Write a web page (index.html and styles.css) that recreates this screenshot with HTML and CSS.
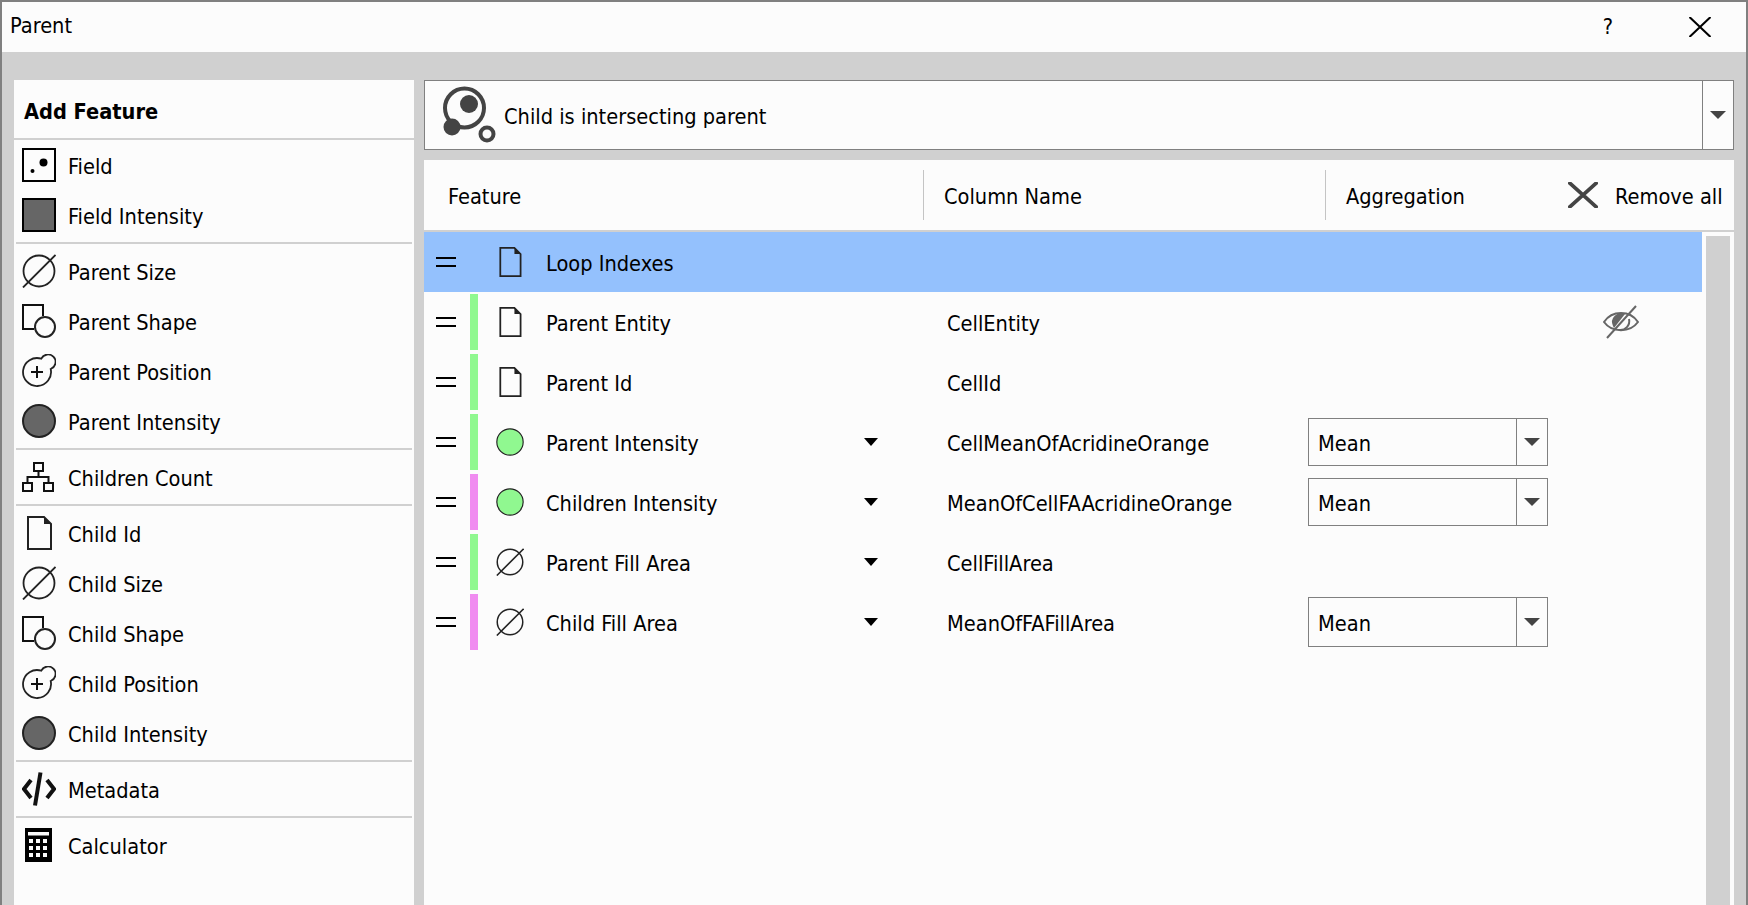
FILE: index.html
```html
<!DOCTYPE html>
<html lang="en">
<head>
    <meta charset="UTF-8">
    <meta name="viewport" content="width=device-width, initial-scale=1.0">
    <title>Parent</title>
    <link rel="stylesheet" href="styles.css">
</head>
<body>

    <!-- shared icons -->
    <svg class="defs" width="0" height="0">
        <symbol id="i-field" viewBox="0 0 34 34"><rect x="1" y="1" width="32" height="32" fill="none" stroke="#000" stroke-width="2"/><circle cx="21.5" cy="14.5" r="4" fill="#000"/><circle cx="10.5" cy="23" r="2" fill="#000"/></symbol>
        <symbol id="i-square" viewBox="0 0 34 34"><rect x="1" y="1" width="32" height="32" fill="#666" stroke="#000" stroke-width="2"/></symbol>
        <symbol id="i-size" viewBox="0 0 34 34"><circle cx="17" cy="17" r="15.5" fill="none" stroke="#222" stroke-width="1.8"/><path d="M1 33.5L33.5 1" stroke="#222" stroke-width="1.8"/></symbol>
        <symbol id="i-shape" viewBox="0 0 34 34"><path d="M21 12V1H1V25H12" fill="none" stroke="#111" stroke-width="2"/><circle cx="23" cy="23" r="10" fill="none" stroke="#222" stroke-width="2"/></symbol>
        <symbol id="i-pos" viewBox="0 0 34 34"><path d="M19.3 4.7A14 14 0 1 0 28.7 15A7.5 7.5 0 1 0 19.3 4.7Z" fill="none" stroke="#222" stroke-width="1.8"/><path d="M9 18H21M15 12V24" stroke="#111" stroke-width="2"/></symbol>
        <symbol id="i-disc" viewBox="0 0 34 34"><circle cx="17" cy="17" r="16" fill="#666" stroke="#222" stroke-width="2"/></symbol>
        <symbol id="i-disc-green" viewBox="0 0 34 34"><circle cx="17" cy="17" r="16" fill="#90f890" stroke="#222" stroke-width="1.4"/></symbol>
        <symbol id="i-tree" viewBox="0 0 34 34"><g fill="none" stroke="#111" stroke-width="2"><rect x="12" y="3" width="9" height="8"/><rect x="1" y="23" width="9" height="8"/><rect x="22" y="23" width="9" height="8"/><path d="M16.5 11V17M5.5 23V17H26.5V23"/></g></symbol>
        <symbol id="i-doc" viewBox="0 0 34 34"><path d="M6 1H22L29 8V33H6Z" fill="none" stroke="#222" stroke-width="2"/><path d="M22 1V8H29Z" fill="#222"/></symbol>
        <symbol id="i-code" viewBox="0 0 34 34"><path d="M9 8L2 17L9 26M25 8L32 17L25 26" fill="none" stroke="#111" stroke-width="4"/><path d="M13 33.5L18.5 0.5" stroke="#111" stroke-width="4"/></symbol>
        <symbol id="i-calc" viewBox="0 0 34 34"><rect x="3" y="0" width="27" height="34" fill="#000"/><rect x="6" y="4" width="21" height="3.5" fill="#fcfcfc"/><g fill="#fcfcfc"><rect x="7" y="11" width="4" height="4"/><rect x="14" y="11" width="4" height="4"/><rect x="21" y="11" width="4" height="4"/><rect x="7" y="18" width="4" height="4"/><rect x="14" y="18" width="4" height="4"/><rect x="21" y="18" width="4" height="4"/><rect x="7" y="25" width="4" height="4"/><rect x="14" y="25" width="4" height="4"/><rect x="21" y="25" width="4" height="4"/></g></symbol>
    </svg>

    <div class="window">
        <div class="titlebar">
            <span class="title">Parent</span>
            <span class="help">?</span>
            <svg class="close" viewBox="0 0 22 20"><path d="M0.5 0L21.5 20M21.5 0L0.5 20" stroke="#000" stroke-width="2"/></svg>
        </div>

        <div class="content">
            <aside class="sidebar">
                <h2 class="side-head">Add Feature</h2>
                <div class="side-item"><svg class="icon"><use href="#i-field"/></svg>Field</div>
                <div class="side-item"><svg class="icon"><use href="#i-square"/></svg>Field Intensity</div>
                <hr class="side-sep">
                <div class="side-item"><svg class="icon"><use href="#i-size"/></svg>Parent Size</div>
                <div class="side-item"><svg class="icon"><use href="#i-shape"/></svg>Parent Shape</div>
                <div class="side-item"><svg class="icon"><use href="#i-pos"/></svg>Parent Position</div>
                <div class="side-item"><svg class="icon"><use href="#i-disc"/></svg>Parent Intensity</div>
                <hr class="side-sep">
                <div class="side-item"><svg class="icon"><use href="#i-tree"/></svg>Children Count</div>
                <hr class="side-sep">
                <div class="side-item"><svg class="icon"><use href="#i-doc"/></svg>Child Id</div>
                <div class="side-item"><svg class="icon"><use href="#i-size"/></svg>Child Size</div>
                <div class="side-item"><svg class="icon"><use href="#i-shape"/></svg>Child Shape</div>
                <div class="side-item"><svg class="icon"><use href="#i-pos"/></svg>Child Position</div>
                <div class="side-item"><svg class="icon"><use href="#i-disc"/></svg>Child Intensity</div>
                <hr class="side-sep">
                <div class="side-item"><svg class="icon"><use href="#i-code"/></svg>Metadata</div>
                <hr class="side-sep">
                <div class="side-item"><svg class="icon"><use href="#i-calc"/></svg>Calculator</div>
            </aside>

            <main class="main">
                <div class="relation">
                    <svg class="relation-icon" viewBox="0 0 60 62">
                        <circle cx="24.5" cy="24" r="19.5" fill="none" stroke="#444" stroke-width="4"/>
                        <circle cx="29" cy="20" r="9" fill="#444"/>
                        <circle cx="12" cy="43" r="8.5" fill="#444"/>
                        <circle cx="47" cy="50" r="6.5" fill="none" stroke="#444" stroke-width="4"/>
                    </svg>
                    <span class="relation-text">Child is intersecting parent</span>
                    <span class="relation-btn"><i class="arrow"></i></span>
                </div>

                <section class="table">
                    <div class="thead">
                        <span class="th th-feature">Feature</span>
                        <span class="th th-column">Column Name</span>
                        <span class="th th-agg">Aggregation</span>
                        <svg class="remove-icon" viewBox="0 0 30 26"><path d="M0.5 0L29.5 26M29.5 0L0.5 26" stroke="#444" stroke-width="3.8"/></svg>
                        <span class="remove-text">Remove all</span>
                    </div>
                    <div class="tbody">
                        <div class="rows">
                            <div class="row selected">
                                <span class="handle"></span><span></span>
                                <svg class="row-icon doc"><use href="#i-doc"/></svg>
                                <span class="label">Loop Indexes</span>
                            </div>
                            <div class="row">
                                <span class="handle"></span><span class="bar green"></span>
                                <svg class="row-icon doc"><use href="#i-doc"/></svg>
                                <span class="label">Parent Entity</span>
                                <span class="name">CellEntity</span>
                                <span></span>
                                <svg class="eye" viewBox="0 0 36 34"><path d="M1 17C9 5 27 5 35 17C27 28 9 28 1 17Z" fill="none" stroke="#666" stroke-width="2"/><path d="M10 21A9 9 0 0 1 22 9L11 23Z" fill="#666"/><path d="M26 14A9 9 0 0 1 16 25" fill="none" stroke="#666" stroke-width="2"/><path d="M4 33L33 1" stroke="#666" stroke-width="2"/></svg>
                            </div>
                            <div class="row">
                                <span class="handle"></span><span class="bar green"></span>
                                <svg class="row-icon doc"><use href="#i-doc"/></svg>
                                <span class="label">Parent Id</span>
                                <span class="name">CellId</span>
                            </div>
                            <div class="row">
                                <span class="handle"></span><span class="bar green"></span>
                                <svg class="row-icon"><use href="#i-disc-green"/></svg>
                                <span class="label">Parent Intensity<i class="drop"></i></span>
                                <span class="name">CellMeanOfAcridineOrange</span>
                                <div class="combo"><span>Mean</span><b><i class="arrow"></i></b></div>
                            </div>
                            <div class="row">
                                <span class="handle"></span><span class="bar pink"></span>
                                <svg class="row-icon"><use href="#i-disc-green"/></svg>
                                <span class="label">Children Intensity<i class="drop"></i></span>
                                <span class="name">MeanOfCellFAAcridineOrange</span>
                                <div class="combo"><span>Mean</span><b><i class="arrow"></i></b></div>
                            </div>
                            <div class="row">
                                <span class="handle"></span><span class="bar green"></span>
                                <svg class="row-icon"><use href="#i-size"/></svg>
                                <span class="label">Parent Fill Area<i class="drop"></i></span>
                                <span class="name">CellFillArea</span>
                            </div>
                            <div class="row">
                                <span class="handle"></span><span class="bar pink"></span>
                                <svg class="row-icon"><use href="#i-size"/></svg>
                                <span class="label">Child Fill Area<i class="drop"></i></span>
                                <span class="name">MeanOfFAFillArea</span>
                                <div class="combo tall"><span>Mean</span><b><i class="arrow"></i></b></div>
                            </div>
                        </div>
                        <div class="scrollbar"></div>
                    </div>
                </section>
            </main>
        </div>
    </div>

</body>
</html>
```

FILE: styles.css
```css
html, body{
    margin:0;
    height:100%;
    overflow:hidden;
}

body{
    font-family:"DejaVu Sans", "Noto Sans", sans-serif;
    font-stretch:condensed;
    font-size:21.6px;
    color:#000;
}

.defs{
    position:absolute;
}

.window{
    box-sizing:border-box;
    height:905px;
    display:flex;
    flex-direction:column;
    border:2px solid #808080;
    border-bottom:none;
    background-color:#d0d0d0;
}

.titlebar{
    height:50px;
    flex:none;
    display:flex;
    align-items:center;
    background-color:#fcfcfc;
    padding-left:8px;
}

.title{
    flex:1;
    padding-bottom:4px;
}

.help{
    margin-right:76px;
    padding-bottom:2px;
}

.close{
    width:22px;
    height:20px;
    margin-right:35px;
}

.content{
    flex:1;
    min-height:0;
    display:flex;
    gap:10px;
    padding:28px 12px 0;
}

/* left list */
.sidebar{
    width:400px;
    flex:none;
    background-color:#fcfcfc;
}

.side-head{
    margin:0;
    height:60px;
    box-sizing:border-box;
    padding-left:10px;
    line-height:63px;
    font-size:21.6px;
    font-weight:bold;
    border-bottom:2px solid #d0d0d0;
}

.side-item{
    height:50px;
    box-sizing:border-box;
    display:flex;
    align-items:center;
    gap:12px;
    padding:2px 0 0 8px;
}

.icon{
    width:34px;
    height:34px;
    flex:none;
    margin-top:-2px;
}

.side-sep{
    border:none;
    height:2px;
    margin:2px 2px;
    background-color:#d0d0d0;
}

/* right side */
.main{
    flex:1;
    min-width:0;
    display:flex;
    flex-direction:column;
    gap:10px;
}

.relation{
    height:70px;
    box-sizing:border-box;
    flex:none;
    display:flex;
    align-items:center;
    border:1px solid #808080;
    background-color:#fcfcfc;
    padding-left:15px;
}

.relation-icon{
    width:60px;
    height:62px;
    flex:none;
}

.relation-text{
    flex:1;
    margin-left:4px;
    padding-top:2px;
}

.relation-btn{
    width:30px;
    height:100%;
    display:flex;
    align-items:center;
    justify-content:center;
    border-left:1px solid #808080;
}

.arrow{
    width:0;
    height:0;
    border-left:8px solid transparent;
    border-right:8px solid transparent;
    border-top:8px solid #444;
}

.table{
    flex:1;
    min-height:0;
    display:flex;
    flex-direction:column;
    background-color:#fcfcfc;
}

.thead{
    height:72px;
    box-sizing:border-box;
    flex:none;
    display:flex;
    align-items:center;
    border-bottom:2px solid #d0d0d0;
}

.th{
    height:50px;
    line-height:54px;
    box-sizing:border-box;
}

.th-feature{
    width:499px;
    padding-left:24px;
}

.th-column{
    width:402px;
    padding-left:20px;
    border-left:1px solid #c4c4c4;
}

.th-agg{
    width:243px;
    padding-left:20px;
    border-left:1px solid #c4c4c4;
}

.remove-icon{
    width:30px;
    height:26px;
    flex:none;
}

.remove-text{
    margin-left:17px;
    padding-top:2px;
}

.tbody{
    flex:1;
    min-height:0;
    display:flex;
}

.rows{
    width:1278px;
    flex:none;
}

.scrollbar{
    width:24px;
    margin:4px 4px 0;
    background-color:#d0d0d0;
}

.row{
    height:60px;
    display:grid;
    grid-template-columns:46px 8px 68px 401px 361px 240px 55px 36px;
    align-items:center;
}

/* cells after the icon keep their own columns, so empty rows stay aligned */
.row .label{
    grid-column:4;
    display:flex;
    align-items:center;
    justify-content:space-between;
    padding:2px 69px 0 0;
}

.row .name{
    grid-column:5;
    padding-top:2px;
}

.row .combo{
    grid-column:6;
}

.row .eye{
    grid-column:8;
}

.selected{
    background-color:#94c1fd;
}

.handle{
    display:block;
    width:20px;
    height:6px;
    margin-left:12px;
    border-top:2px solid #000;
    border-bottom:2px solid #000;
}

.bar{
    display:block;
    height:56px;
}

.green{
    background-color:#90f890;
}

.pink{
    background-color:#f08cf0;
}

.row-icon{
    width:28px;
    height:28px;
    margin-left:18px;
}

.row-icon.doc{
    width:30px;
    height:30px;
    margin-left:17px;
}

.drop{
    width:0;
    height:0;
    margin-top:-2px;
    border-left:7px solid transparent;
    border-right:7px solid transparent;
    border-top:8px solid #000;
}

.combo{
    height:48px;
    box-sizing:border-box;
    display:flex;
    align-items:center;
    border:1px solid #808080;
}

.combo.tall{
    height:50px;
}

.combo span{
    flex:1;
    padding:2px 0 0 9px;
}

.combo b{
    width:30px;
    height:100%;
    display:flex;
    align-items:center;
    justify-content:center;
    border-left:1px solid #808080;
}

.eye{
    width:36px;
    height:34px;
}
```
